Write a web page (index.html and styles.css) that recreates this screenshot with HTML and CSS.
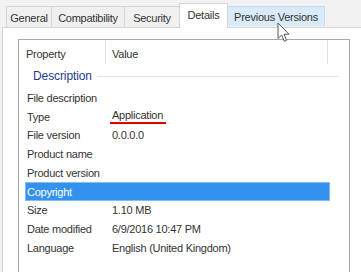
FILE: index.html
```html
<!DOCTYPE html>
<html lang="en">
<head>
    <meta charset="UTF-8">
    <title>Properties - Details</title>
    <link rel="stylesheet" href="styles.css">
</head>
<body>
<div class="dialog">
    <div class="tabs">
        <div class="tab tab-general">General</div>
        <div class="tab tab-compat">Compatibility</div>
        <div class="tab tab-security">Security</div>
        <div class="tab tab-details selected">Details</div>
        <div class="tab tab-previous hover">Previous Versions</div>
    </div>

    <div class="panel">
        <div class="list">
            <div class="list-header">
                <div class="col col-name">Property</div>
                <div class="col col-value">Value</div>
                <div class="col col-rest"></div>
            </div>

            <div class="group">
                <span class="group-title">Description</span>
                <span class="group-line"></span>
            </div>

            <div class="row"><span class="name">File description</span><span class="value"></span></div>
            <div class="row"><span class="name">Type</span><span class="value"><span class="marked">Application</span></span></div>
            <div class="row"><span class="name">File version</span><span class="value">0.0.0.0</span></div>
            <div class="row"><span class="name">Product name</span><span class="value"></span></div>
            <div class="row"><span class="name">Product version</span><span class="value"></span></div>
            <div class="row active"><span class="name">Copyright</span><span class="value"></span></div>
            <div class="row"><span class="name">Size</span><span class="value">1.10 MB</span></div>
            <div class="row"><span class="name">Date modified</span><span class="value">6/9/2016 10:47 PM</span></div>
            <div class="row"><span class="name">Language</span><span class="value">English (United Kingdom)</span></div>
        </div>
    </div>

    <!-- mouse pointer over the Previous Versions tab -->
    <svg class="cursor" width="14" height="21" viewBox="0 0 14 21">
        <path d="M1 1 L1 16.5 L4.6 13 L7.3 19.3 L9.6 18.3 L7 12.2 L12 12.2 Z" fill="#fff" stroke="#555" stroke-width="1" stroke-linejoin="round"/>
    </svg>
</div>
</body>
</html>
```

FILE: styles.css
```css
:root {
    --page-bg: #f2f2f2;
    --tab-border: #d6d6d6;
    --list-border: #a9a9a9;
    --text: #333333;
    --group-blue: #1f3a8f;
    --select-blue: #3392ee;
    --hover-blue: #d9eaf8;
    --font-ui: "Liberation Sans", Arial, sans-serif;
}

* {
    box-sizing: border-box;
    margin: 0;
    padding: 0;
}

body {
    background-color: var(--page-bg);
    font-family: var(--font-ui);
    font-size: 11px;
    letter-spacing: -0.25px;
    color: var(--text);
    overflow: hidden;
}

.dialog {
    position: relative;
    width: 361px;
    height: 272px;
}

/* Tab strip */
.tabs {
    display: flex;
    align-items: flex-end;
    height: 27px;
    padding-left: 7px;
}

.tab {
    height: 21px;
    padding: 1px 5px 0;
    display: flex;
    align-items: center;
    justify-content: center;
    border: 1px solid var(--tab-border);
    border-bottom: none;
    margin-left: -1px;
    background-color: #f0f0f0;
    white-space: nowrap;
}

.tab-general { width: 46px; }
.tab-compat { width: 74px; }
.tab-security { width: 56px; }
.tab-details { width: 49px; }
.tab-previous { width: 98px; }

.tab.selected {
    height: 25px;
    background-color: #fff;
    position: relative;
    z-index: 2;
    margin-bottom: -1px;
    padding-top: 0;
    padding-bottom: 3px;
}

.tab.hover {
    background-color: var(--hover-blue);
    border-color: #c3dcf3;
    height: 20px;
    margin-bottom: 1px;
}

/* Page body */
.panel {
    margin-left: 2px;
    height: 245px;
    background-color: #fff;
    border-top: 1px solid var(--tab-border);
    border-left: 1px solid #cfcfcf;
    padding: 11px 0 0 15px;
}

.list {
    width: 332px;
    height: 240px;
    border: 1px solid var(--list-border);
    border-bottom: none;
    background-color: #fff;
}

.list-header {
    display: flex;
    height: 24px;
}

.list-header .col {
    display: flex;
    align-items: center;
    padding-top: 4px;
}

.col-name {
    width: 87px;
    padding-left: 7px;
    border-right: 1px solid #e2e2e2;
}

.col-value {
    width: 222px;
    padding-left: 6px;
    border-right: 1px solid #e2e2e2;
}

.col-rest {
    flex: 1;
}

.group {
    display: flex;
    align-items: center;
    height: 24.6px;
    padding: 0 11px 0 14px;
    gap: 5px;
}

.group-title {
    color: var(--group-blue);
    font-size: 12px;
    letter-spacing: -0.1px;
}

.group-line {
    flex: 1;
    height: 1px;
    background-color: #e3e6ec;
}

.row {
    display: flex;
    align-items: center;
    height: 18.75px;
    margin: 0 19px 0 6px;
    padding-left: 2px;
}

.row .name {
    width: 85px;
    flex-shrink: 0;
}

.row .value {
    white-space: nowrap;
}

.row.active {
    background-color: var(--select-blue);
    border: 1px solid #80bdf6;
    padding-left: 1px;
    color: #fff;
}

.marked {
    display: inline-block;
    line-height: 12px;
    margin-left: -2px;
    padding: 0 3px 1px 2px;
    border-bottom: 2px solid #e00000;
}

.cursor {
    position: absolute;
    left: 277px;
    top: 22px;
}
```
